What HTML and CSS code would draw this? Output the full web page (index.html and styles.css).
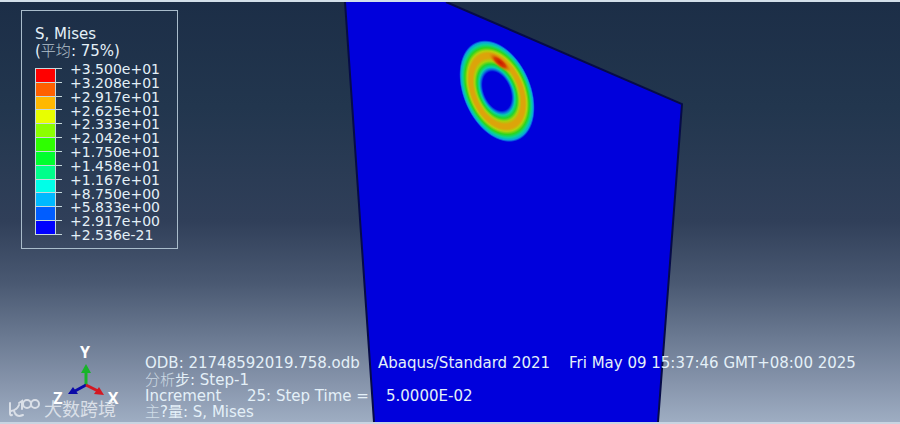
FILE: index.html
```html
<!DOCTYPE html>
<html lang="zh">
<head>
<meta charset="utf-8">
<title>S, Mises</title>
<link rel="stylesheet" href="styles.css">
</head>
<body>
<main class="viewport">
  <svg class="model" viewBox="0 0 900 424" preserveAspectRatio="none" aria-hidden="true">
    <defs>
      <radialGradient id="stress">
        <stop offset=".38" stop-color="#0000dc"/>
        <stop offset=".43" stop-color="#0879dc"/>
        <stop offset=".47" stop-color="#08d0a8"/>
        <stop offset=".53" stop-color="#1fd52c"/>
        <stop offset=".59" stop-color="#a6d40c"/>
        <stop offset=".65" stop-color="#dca40a"/>
        <stop offset=".74" stop-color="#dca40a"/>
        <stop offset=".79" stop-color="#b5d20c"/>
        <stop offset=".85" stop-color="#2cd61c"/>
        <stop offset=".91" stop-color="#08d39a"/>
        <stop offset=".96" stop-color="#0aa0e0"/>
        <stop offset="1" stop-color="#0000dc"/>
      </radialGradient>
      <radialGradient id="peak">
        <stop offset="0" stop-color="#c81400"/>
        <stop offset=".45" stop-color="#d63c00"/>
        <stop offset="1" stop-color="#dca40a" stop-opacity="0"/>
      </radialGradient>
    </defs>
    <path d="M345 0H446L682 103L658 424H374Z" fill="#0000dc"/>
    <path d="M345 0L374 424M446 0L682 103L658 424" fill="none" stroke="#060b48" stroke-width="2"/>
    <ellipse cx="497" cy="90" rx="34" ry="54" transform="rotate(-23 497 90)" fill="url(#stress)"/>
    <ellipse cx="500" cy="61" rx="15" ry="5" transform="rotate(40 500 61)" fill="url(#peak)"/>
  </svg>

  <section class="legend">
    <h1 class="legend-title">S, Mises</h1>
    <p class="legend-title">(<span class="cjk">平均</span>: 75%)</p>
    <div class="scale">
      <div class="bar">
        <i class="c1"></i><i class="c2"></i><i class="c3"></i><i class="c4"></i><i class="c5"></i><i class="c6"></i><i class="c7"></i><i class="c8"></i><i class="c9"></i><i class="c10"></i><i class="c11"></i><i class="c12"></i>
      </div>
      <ul class="values">
        <li>+3.500e+01</li><li>+3.208e+01</li><li>+2.917e+01</li><li>+2.625e+01</li><li>+2.333e+01</li><li>+2.042e+01</li><li>+1.750e+01</li><li>+1.458e+01</li><li>+1.167e+01</li><li>+8.750e+00</li><li>+5.833e+00</li><li>+2.917e+00</li><li>+2.536e-21</li>
      </ul>
    </div>
  </section>

  <footer class="footer">
    <div class="corner">
      <svg class="triad" viewBox="0 0 80 76" role="img" aria-label="X Y Z">
        <g stroke-width="3" fill="none">
          <path d="M46 45V29" stroke="#18b42a"/>
          <path d="M46 45L35 51" stroke="#0a0aa8"/>
          <path d="M46 45L58 51" stroke="#d41822"/>
        </g>
        <path d="M46 24L51 33H41Z" fill="#18b42a"/>
        <path d="M28 54L33 47L38 54Z" fill="#0a0aa8"/>
        <path d="M64 55L59 47L54 54Z" fill="#d41822"/>
        <g class="axis">
          <text x="45" y="18">Y</text>
          <text x="18" y="64">Z</text>
          <text x="73" y="64">X</text>
        </g>
      </svg>
      <div class="watermark">
        <svg class="mark" viewBox="0 0 32 20" aria-hidden="true">
          <path d="M2 5V15Q2 18 4 17M3 13Q9 12 11 7M6 13Q8 20 15 17M11 5L14 3V11"/>
          <circle cx="19" cy="6" r="4"/><circle cx="27" cy="6" r="4"/>
        </svg>
        <span>大数跨境</span>
      </div>
    </div>
    <div class="status">
      <p class="row row-first"><span class="odb">ODB: 21748592019.758.odb</span><span class="solver">Abaqus/Standard 2021</span><span>Fri May 09 15:37:46 GMT+08:00 2025</span></p>
      <p class="row"><span><span class="cjk">分析</span><span class="cjk-bold">步</span>: Step-1</span></p>
      <p class="row"><span class="increment">Increment</span><span class="steptime">25: Step Time =</span><span>5.0000E-02</span></p>
      <p class="row"><span><span class="cjk">主</span>?<span class="cjk-bold">量</span>: S, Mises</span></p>
    </div>
  </footer>
</main>
</body>
</html>
```
FILE: styles.css
```css
* {
  box-sizing: border-box;
}

body {
  margin: 0;
  font-family: "DejaVu Sans", "Noto Sans CJK SC", sans-serif;
  font-size: 15px;
  color: #e4f0f8;
}

h1, p, ul {
  margin: 0;
  padding: 0;
  font-size: 15px;
  font-weight: 400;
  list-style: none;
}

.viewport {
  position: relative;
  display: flex;
  flex-direction: column;
  justify-content: space-between;
  align-items: flex-start;
  min-height: 100vh;
  padding: 8px 0 0 21px;
  border-top: 2px solid #d3e0ea;
  border-bottom: 2px solid #c9d5e2;
  background: linear-gradient(#1c2e47 0%, #22364e 25%, #303f59 52%, #4a5972 67%, #6b7a92 80%, #8795ac 91%, #9eadc2 100%);
}

.model {
  position: absolute;
  inset: 0;
  width: 100%;
  height: 100%;
}

.legend {
  position: relative;
  width: 157px;
  padding: 15px 13px 6px;
  border: 1px solid #a9bccb;
}

.legend-title {
  line-height: 17px;
}

.cjk,
.cjk-bold {
  font-family: "Noto Sans CJK SC", sans-serif;
  line-height: 0;
}

.cjk {
  font-weight: 300;
  opacity: .75;
}

.scale {
  display: flex;
  gap: 14px;
  margin-top: 2px;
}

.bar {
  display: flex;
  flex-direction: column;
  width: 21px;
  height: 167px;
  margin-top: 6px;
  border: 1px solid #c6d8dc;
  border-top: 0;
}

.bar i {
  position: relative;
  flex: 1;
  border-top: 1px solid #c6d8dc;
}

.bar i::after,
.bar i:last-child::before {
  content: "";
  position: absolute;
  top: -1px;
  left: 100%;
  width: 7px;
  height: 1px;
  background: #c6d8dc;
}

.bar i:last-child::before {
  top: 100%;
}

.c1 { background: #ff0000; }
.c2 { background: #ff6000; }
.c3 { background: #ffb800; }
.c4 { background: #e8ff00; }
.c5 { background: #8bff00; }
.c6 { background: #2eff00; }
.c7 { background: #00ff2e; }
.c8 { background: #00ff8b; }
.c9 { background: #00ffe8; }
.c10 { background: #00b9ff; }
.c11 { background: #005dff; }
.c12 { background: #0000ff; }

.values {
  display: flex;
  flex-direction: column;
  height: 180px;
  font-size: 14px;
}

.values li {
  flex: 1;
  line-height: 14px;
  min-height: 0;
}

.footer {
  position: relative;
  display: flex;
  align-items: flex-end;
  width: 100%;
}

.corner {
  position: relative;
  width: 124px;
  height: 82px;
}

.triad {
  display: block;
  width: 80px;
  height: 76px;
  margin-left: 19px;
}

.axis {
  font-family: "Open Sans", sans-serif;
  font-size: 16px;
  font-weight: 700;
  fill: #fff;
  text-anchor: middle;
}

.watermark {
  position: absolute;
  left: -13px;
  bottom: 2px;
  display: flex;
  align-items: center;
  gap: 4px;
  font-family: "Noto Sans CJK SC", sans-serif;
  font-size: 18px;
  line-height: 24px;
  white-space: nowrap;
  color: #e6eaf0;
  opacity: .85;
}

.mark {
  width: 32px;
  height: 20px;
  fill: none;
  stroke: #e6eaf0;
  stroke-width: 2;
  stroke-linecap: round;
}

.status {
  padding-bottom: 2px;
}

.row {
  display: flex;
  line-height: 16px;
  white-space: nowrap;
}

.row-first {
  margin-bottom: 1px;
}

.odb {
  width: 233px;
}

.solver {
  width: 191px;
}

.increment {
  width: 102px;
}

.steptime {
  width: 139px;
}
```
